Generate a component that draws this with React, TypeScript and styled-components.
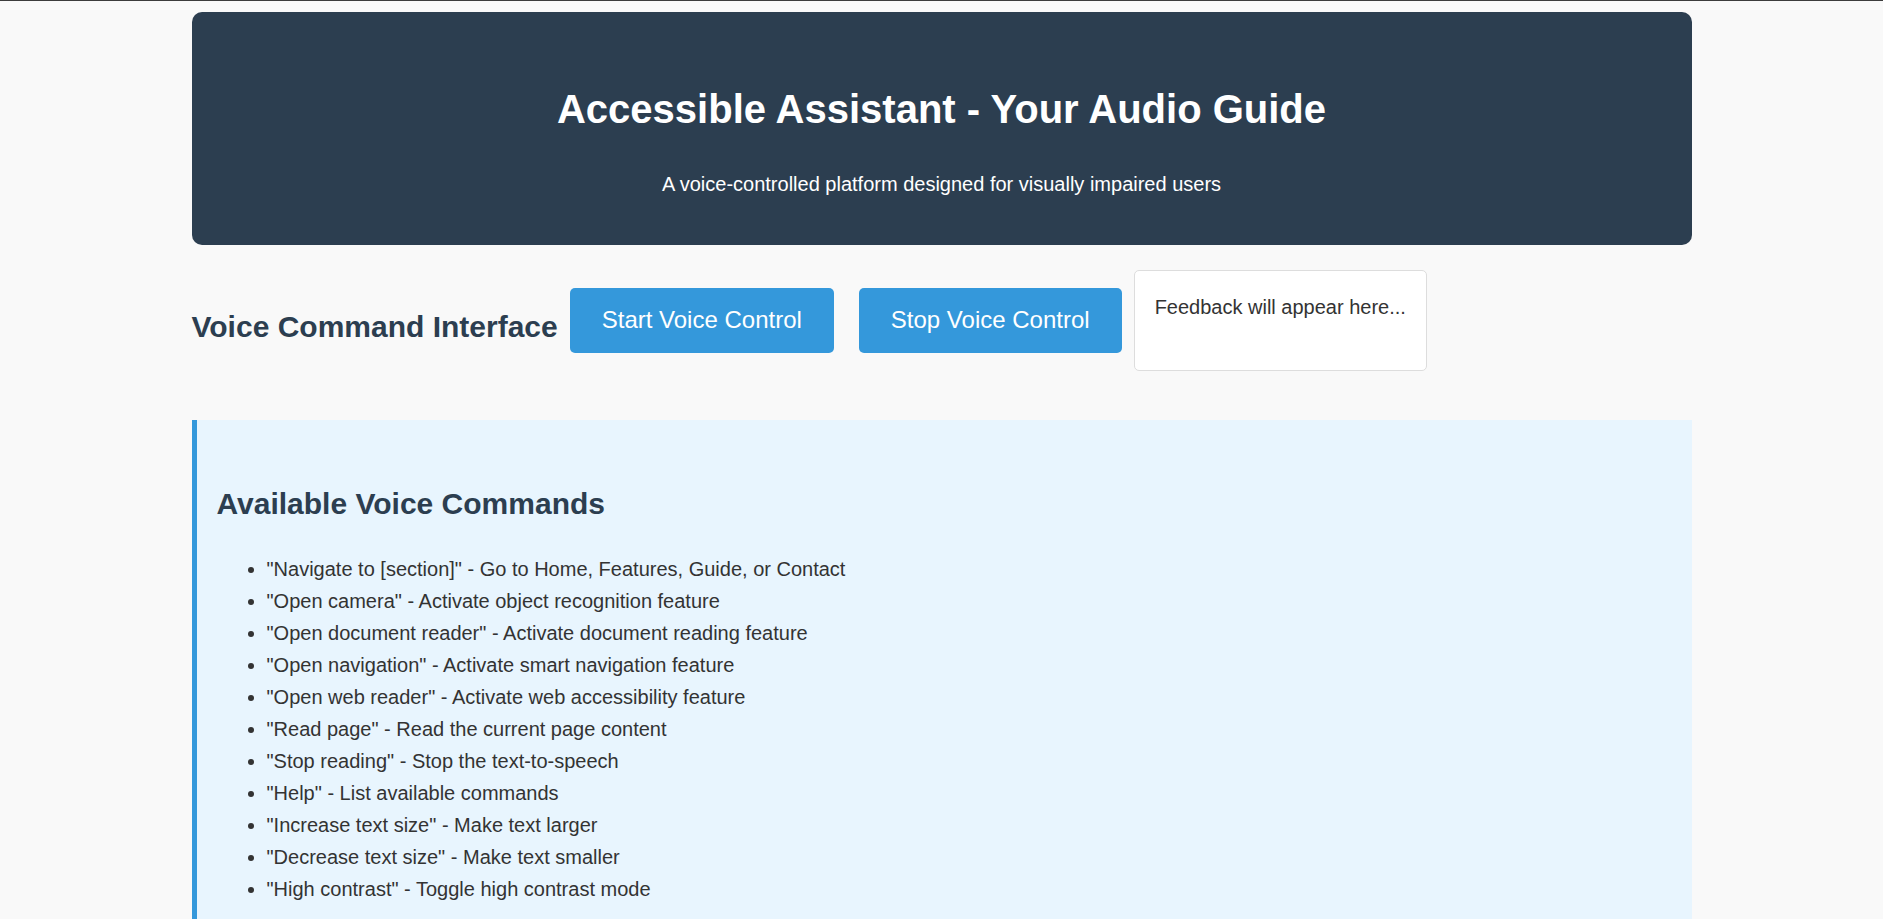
import React from "react";
import styled, { createGlobalStyle } from "styled-components";

const GlobalStyle = createGlobalStyle`
  html, body {
    margin: 0;
    padding: 0;
    background: #f9f9f9;
  }
  body {
    border-top: 1px solid #3c3c3c;
    font-family: "Liberation Sans", Arial, sans-serif;
    font-size: 20px;
    line-height: 1.6;
    color: #333;
  }
  * { box-sizing: border-box; }
`;

const Page = styled.div`
  max-width: 1500px;
  margin: 0 auto;
  padding: 11px 0 0;
`;

const Header = styled.header`
  background: #2c3e50;
  color: #fff;
  border-radius: 10px;
  text-align: center;
  padding: 40px 20px 45px;
`;

const Title = styled.h1`
  margin: 25px 0 27px;
  font-size: 40px;
  font-weight: 700;
`;

const Subtitle = styled.p`
  margin: 0;
  font-size: 20px;
`;

const ControlRow = styled.section`
  display: flex;
  align-items: center;
  margin-top: 25px;
`;

const SectionTitle = styled.h2`
  margin: 13px 12px 0 0;
  font-size: 30px;
  font-weight: 700;
  color: #2c3e50;
  white-space: nowrap;
`;

const ActionButton = styled.button<{ $gap: number }>`
  font-family: inherit;
  font-size: 24px;
  line-height: 1.2;
  color: #fff;
  background: #3498db;
  border: none;
  border-radius: 5px;
  padding: 18px 32px;
  margin-right: ${(p) => p.$gap}px;
  white-space: nowrap;
  cursor: pointer;
`;

const Feedback = styled.div`
  background: #fff;
  border: 1px solid #ddd;
  border-radius: 5px;
  padding: 20px;
  height: 101px;
  white-space: nowrap;
  color: #333;
`;

const CommandsPanel = styled.section`
  margin-top: 49px;
  background: #e8f5fe;
  border-left: 5px solid #3498db;
  padding: 20px 20px 20px;
`;

const PanelTitle = styled.h2`
  margin: 40px 0 25px;
  font-size: 30px;
  font-weight: 700;
  color: #2c3e50;
`;

const CommandList = styled.ul`
  margin: 0;
  padding-left: 50px;
`;

const CommandItem = styled.li`
  color: #333;
`;

const commands = [
  '"Navigate to [section]" - Go to Home, Features, Guide, or Contact',
  '"Open camera" - Activate object recognition feature',
  '"Open document reader" - Activate document reading feature',
  '"Open navigation" - Activate smart navigation feature',
  '"Open web reader" - Activate web accessibility feature',
  '"Read page" - Read the current page content',
  '"Stop reading" - Stop the text-to-speech',
  '"Help" - List available commands',
  '"Increase text size" - Make text larger',
  '"Decrease text size" - Make text smaller',
  '"High contrast" - Toggle high contrast mode',
];

export default function App() {
  return (
    <>
      <GlobalStyle />
      <Page>
        <Header>
          <Title>Accessible Assistant - Your Audio Guide</Title>
          <Subtitle>A voice-controlled platform designed for visually impaired users</Subtitle>
        </Header>
        <ControlRow>
          <SectionTitle>Voice Command Interface</SectionTitle>
          <ActionButton $gap={25}>Start Voice Control</ActionButton>
          <ActionButton $gap={12}>Stop Voice Control</ActionButton>
          <Feedback>Feedback will appear here...</Feedback>
        </ControlRow>
        <CommandsPanel>
          <PanelTitle>Available Voice Commands</PanelTitle>
          <CommandList>
            {commands.map((c) => (
              <CommandItem key={c}>{c}</CommandItem>
            ))}
          </CommandList>
        </CommandsPanel>
      </Page>
    </>
  );
}
